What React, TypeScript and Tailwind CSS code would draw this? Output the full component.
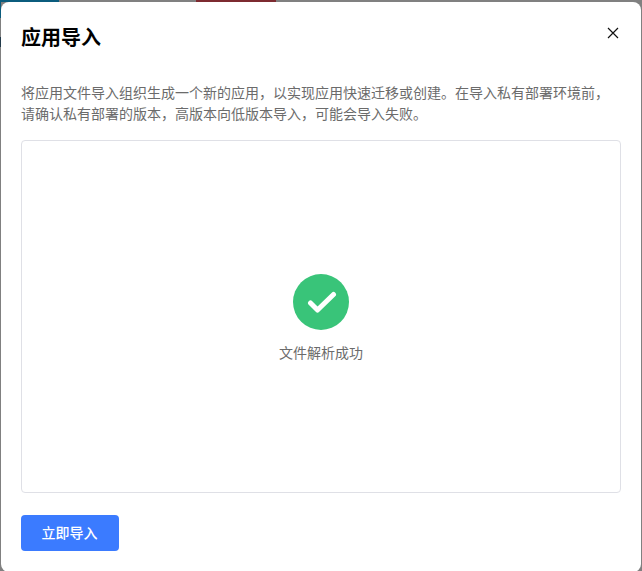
const cjk = "font-['Inter','Noto_Sans_CJK_SC',sans-serif]";

export default function App() {
  return (
    <div className={`relative h-[571px] w-[642px] overflow-hidden bg-[#808080] ${cjk}`}>
      {/* page behind the dialog */}
      <div className="absolute left-0 top-0 h-[18px] w-[1px] bg-[#0b5c7d]" />
      <div className="absolute left-0 top-[37px] h-[10px] w-[1px] bg-[#223a4a]" />
      <div className="flex h-[2px]">
        <div className="w-[59px] bg-[#0b5c7d]" />
        <div className="w-[137px]" />
        <div className="w-[80px] bg-[#7d2a30]" />
      </div>
      <div className="absolute bottom-[-1px] left-[1px] right-[1px] top-[2px] flex flex-col rounded-[8px] bg-white px-[20px]">
        <div className="flex h-[70px] items-start justify-between">
          <h1 className="mt-[22px] text-[20px] font-bold leading-[28px] text-black">应用导入</h1>
          <button className="mr-[-3px] mt-[20px] text-[#111]">
            <svg width="22" height="22" viewBox="0 0 22 22" fill="none">
              <path d="M6 6L16 16M16 6L6 16" stroke="currentColor" strokeWidth="1.2" />
            </svg>
          </button>
        </div>
        <p className="mt-[10px] text-[14px] leading-[21px] text-[#6b6b6b]">
          将应用文件导入组织生成一个新的应用，以实现应用快速迁移或创建。在导入私有部署环境前，请确认私有部署的版本，高版本向低版本导入，可能会导入失败。
        </p>
        <div className="mt-[16px] flex h-[353px] flex-col items-center justify-center rounded-[4px] border border-[#dfe0e6] pt-[4px]">
          <div className="flex h-[56px] w-[56px] items-center justify-center rounded-full bg-[#39c479]">
            <svg width="32" height="24" viewBox="0 0 32 24" fill="none">
              <path d="M5.5 13L12.5 20L28.5 4.5" stroke="white" strokeWidth="5" strokeLinecap="round" strokeLinejoin="round" />
            </svg>
          </div>
          <div className="mt-[13px] text-[14px] leading-[20px] text-[#6b6b6b]">文件解析成功</div>
        </div>
        <button className="mt-[22px] h-[36px] w-[98px] rounded-[4px] bg-[#3b7bff] pb-[2px] pr-[1px] text-[14px] font-medium text-white">
          立即导入
        </button>
      </div>
    </div>
  );
}
